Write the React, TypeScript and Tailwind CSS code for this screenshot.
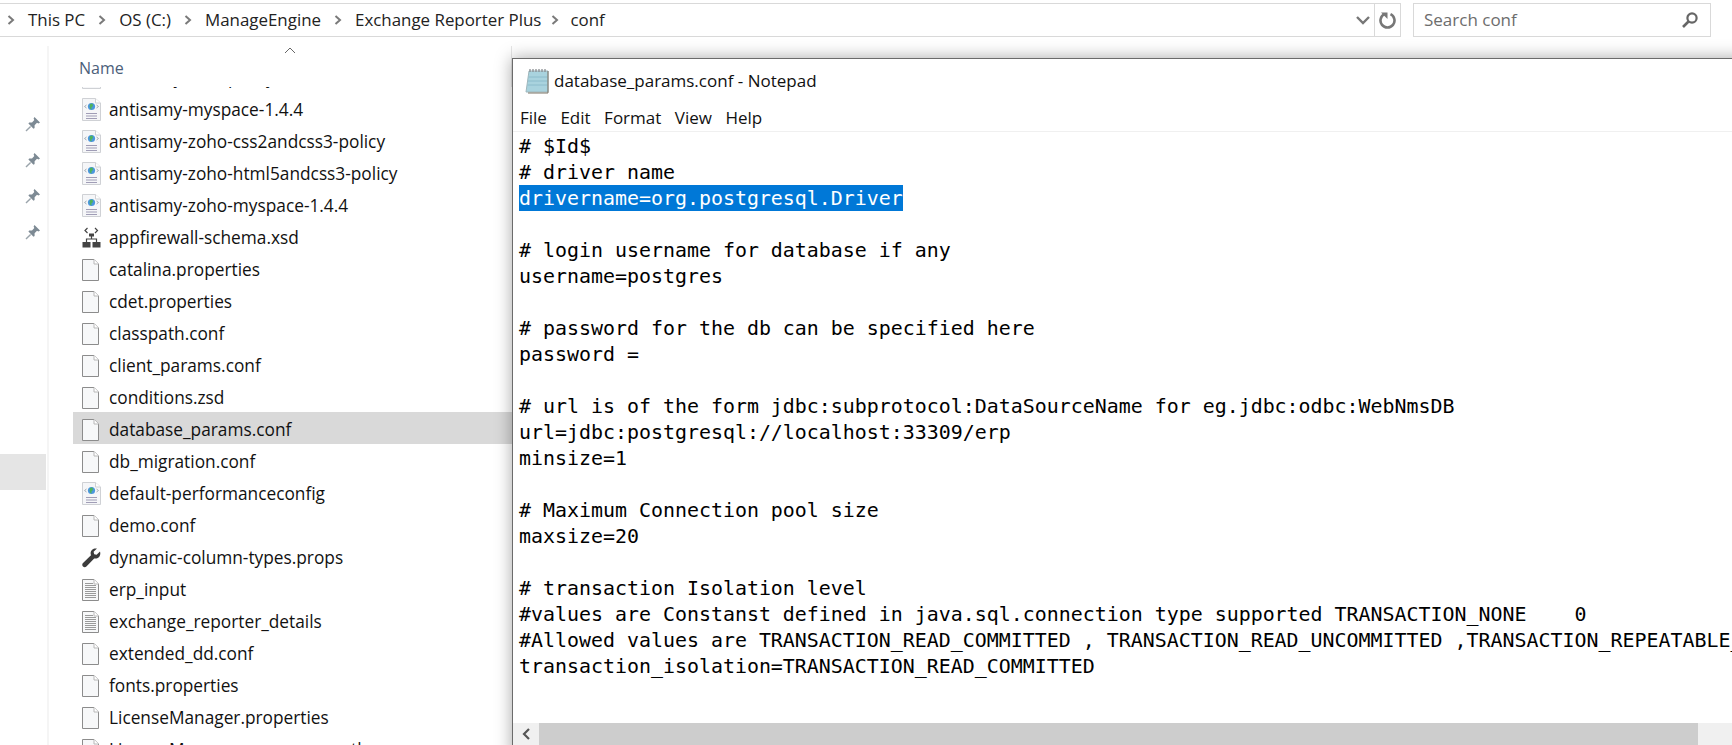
import React from 'react';

const uiFont = "[font-family:'Open_Sans',sans-serif]";

type Kind = 'blank' | 'web' | 'xsd' | 'wrench' | 'text';

const files: { name: string; kind: Kind; selected?: boolean }[] = [
  { name: 'antisamy-css3-policy', kind: 'web' },
  { name: 'antisamy-myspace-1.4.4', kind: 'web' },
  { name: 'antisamy-zoho-css2andcss3-policy', kind: 'web' },
  { name: 'antisamy-zoho-html5andcss3-policy', kind: 'web' },
  { name: 'antisamy-zoho-myspace-1.4.4', kind: 'web' },
  { name: 'appfirewall-schema.xsd', kind: 'xsd' },
  { name: 'catalina.properties', kind: 'blank' },
  { name: 'cdet.properties', kind: 'blank' },
  { name: 'classpath.conf', kind: 'blank' },
  { name: 'client_params.conf', kind: 'blank' },
  { name: 'conditions.zsd', kind: 'blank' },
  { name: 'database_params.conf', kind: 'blank', selected: true },
  { name: 'db_migration.conf', kind: 'blank' },
  { name: 'default-performanceconfig', kind: 'web' },
  { name: 'demo.conf', kind: 'blank' },
  { name: 'dynamic-column-types.props', kind: 'wrench' },
  { name: 'erp_input', kind: 'text' },
  { name: 'exchange_reporter_details', kind: 'text' },
  { name: 'extended_dd.conf', kind: 'blank' },
  { name: 'fonts.properties', kind: 'blank' },
  { name: 'LicenseManager.properties', kind: 'blank' },
  { name: 'LicenseManager-resources-auth', kind: 'blank' },
];

const crumbs = ['This PC', 'OS (C:)', 'ManageEngine', 'Exchange Reporter Plus', 'conf'];

const lines = [
  '# $Id$',
  '# driver name',
  'drivername=org.postgresql.Driver',
  '',
  '# login username for database if any',
  'username=postgres',
  '',
  '# password for the db can be specified here',
  'password =',
  '',
  '# url is of the form jdbc:subprotocol:DataSourceName for eg.jdbc:odbc:WebNmsDB',
  'url=jdbc:postgresql://localhost:33309/erp',
  'minsize=1',
  '',
  '# Maximum Connection pool size',
  'maxsize=20',
  '',
  '# transaction Isolation level',
  '#values are Constanst defined in java.sql.connection type supported TRANSACTION_NONE    0',
  '#Allowed values are TRANSACTION_READ_COMMITTED , TRANSACTION_READ_UNCOMMITTED ,TRANSACTION_REPEATABLE_READ ,TRANSACTION_SERIALIZABLE',
  'transaction_isolation=TRANSACTION_READ_COMMITTED',
];

function Chevron() {
  return (
    <svg width="8" height="10" viewBox="0 0 8 10" className="shrink-0">
      <path d="M1.5 1 L6 5 L1.5 9" fill="none" stroke="#7a7a7a" strokeWidth="2" />
    </svg>
  );
}

function Pin() {
  return (
    <svg width="16" height="16" viewBox="0 0 16 16">
      <path d="M9.5 1 L15 6.5 L13.5 7.5 L12 6.8 L9.6 9.3 L9.6 12 L8.5 12.8 L3.4 7.6 L4.2 6.5 L7 6.5 L9.3 4 L8.6 2.4 Z" fill="#7d8a94" />
      <path d="M5.6 10.4 L1 15" stroke="#9aa4ab" strokeWidth="1.4" />
    </svg>
  );
}

function PageShape({ children }: { children?: React.ReactNode }) {
  return (
    <svg width="18" height="22" viewBox="0 0 18 22" className="block">
      <path d="M0.5 0.5 H12 L16.5 5 V21.5 H0.5 Z" fill="#f7f8f9" stroke="#8c8c8c" />
      <path d="M12 0.5 V5 H16.5" fill="#ffffff" stroke="#b8b8b8" />
      {children}
    </svg>
  );
}

function FileIcon({ kind }: { kind: Kind }) {
  if (kind === 'blank') return <PageShape />;
  if (kind === 'text') {
    return (
      <PageShape>
        {[4, 6, 8, 10, 12, 14, 16, 18].map((y) => (
          <path key={y} d={`M3 ${y + 0.5} H${y < 6 ? 11 : 14}`} stroke="#9a9a9a" />
        ))}
      </PageShape>
    );
  }
  if (kind === 'web') {
    return (
      <svg width="20" height="23" viewBox="0 0 20 23" className="block">
        <path d="M0.5 0.5 H13.5 L18.5 5 V22.5 H0.5 Z" fill="#f5f6f8" stroke="#cfd1d5" />
        <path d="M13.5 0.5 V5 H18.5" fill="#ffffff" stroke="#cfd1d5" />
        <circle cx="9.5" cy="8.5" r="3.6" fill="#4a96de" />
        <path d="M8 6 L10.5 5.5 L11 8 L9.4 9.6 L9.6 11.6 L8.2 11 L7.6 8.4 Z" fill="#4fb35a" />
        <path d="M4.5 7 L2.5 8.5 L4.5 10 M14.5 7 L16.5 8.5 L14.5 10" fill="none" stroke="#a4adb6" />
        <path d="M4 15.5 H15 M4 18 H15 M4 20.5 H15" stroke="#a09db6" />
      </svg>
    );
  }
  if (kind === 'xsd') {
    return (
      <svg width="19" height="21" viewBox="0 0 19 21" className="block">
        <path d="M5.5 1 L3 3.5 L5.5 6 M13 1 L15.5 3.5 L13 6" fill="none" stroke="#444444" strokeWidth="1.2" />
        <path d="M9.5 8 V12 M4.5 15 V12 H14.5 V15" fill="none" stroke="#444444" strokeWidth="1.2" />
        <rect x="7" y="6.5" width="5" height="3" fill="#444444" />
        <rect x="0.5" y="15" width="8" height="5.5" fill="#444444" />
        <rect x="10.5" y="15" width="8" height="5.5" fill="#444444" />
      </svg>
    );
  }
  return (
    <svg width="19" height="20" viewBox="0 0 19 20" className="block">
      <path d="M18 3.5 L14.6 6.8 L12.2 6.2 L11.6 3.8 L15 0.6 C12 -0.2 8.6 1.8 8.6 5.2 C8.6 6 8.8 6.6 9 7.2 L1 15 C0 16 0 17.4 1 18.4 C2 19.4 3.4 19.4 4.4 18.4 L12.2 10.4 C15.8 11.4 19.4 7.8 18 3.5 Z" fill="#3c3c3c" />
    </svg>
  );
}

function NotepadIcon() {
  return (
    <svg width="24" height="26" viewBox="0 0 24 26">
      <path d="M4 3 H23 V24 H1 Z" fill="#a9d3de" stroke="#9fb7bd" />
      <path d="M3.5 9 H22.5 M3 13 H22.5 M2.5 17 H22.5" stroke="#8cbccb" />
      <path d="M23 3 V25 H3" fill="none" stroke="#7d7466" />
      <path d="M5 1 V4 M8 1 V4 M11 1 V4 M14 1 V4 M17 1 V4 M20 1 V4" stroke="#8a8f93" strokeWidth="1.3" />
    </svg>
  );
}

export default function App() {
  return (
    <div className={`w-[1732px] h-[745px] relative overflow-hidden bg-white text-[#111] flex flex-col ${uiFont}`}>
      {/* address bar + search */}
      <div className="h-[46px] shrink-0 pt-[3px] flex items-start">
        <div className="w-[1401px] h-[34px] border border-l-0 border-[#d9d9d9] flex items-center pl-[7px]">
          <div className="flex-1 flex items-center text-[16.9px] text-[#222]">
            {crumbs.map((c, i) => (
              <React.Fragment key={c}>
                <Chevron />
                <span className={i === 3 ? 'ml-[13px] mr-[10px]' : i === 4 ? 'ml-[11px]' : 'mx-[13px]'}>{c}</span>
              </React.Fragment>
            ))}
          </div>
          <svg width="14" height="10" viewBox="0 0 14 10" className="mr-[4px]">
            <path d="M1 2 L7 8 L13 2" fill="none" stroke="#777" strokeWidth="2.4" />
          </svg>
          <div className="w-[26px] h-full border-l border-[#d9d9d9] flex items-center justify-center">
            <svg width="18" height="20" viewBox="0 0 18 20">
              <path d="M11.5 4.2 A7 7 0 1 1 5.5 4.2" fill="none" stroke="#777" strokeWidth="2.6" />
              <path d="M2 2.5 H8.5 V9 Z" fill="#777" />
            </svg>
          </div>
        </div>
        <div className="ml-[12px] w-[298px] h-[34px] border border-[#d9d9d9] flex items-center justify-between pl-[10px] pr-[11px]">
          <span className="text-[17px] text-[#6d6d6d]">Search conf</span>
          <svg width="18" height="18" viewBox="0 0 18 18">
            <circle cx="11" cy="7" r="4.6" fill="none" stroke="#666" strokeWidth="2.2" />
            <path d="M7.5 10.5 L2 16" stroke="#666" strokeWidth="2.6" />
          </svg>
        </div>
      </div>

      {/* explorer body */}
      <div className="flex-1 flex min-h-0">
        <div className="w-[49px] shrink-0 border-r-2 border-[#f5f5f5] flex flex-col">
          <div className="pt-[70px] pl-[25px] flex flex-col gap-[20px]">
            <Pin />
            <Pin />
            <Pin />
            <Pin />
          </div>
          <div className="mt-[214px] w-[46px] h-[36px] bg-[#e5e5e5]" />
        </div>
        <div className="w-[463px] shrink-0 flex flex-col pl-[24px]">
          <div className="h-[41px] shrink-0 relative border-r border-[#e5e5e5] pl-[6px] pt-[10px] text-[16px] text-[#4c607a]">
            Name
            <svg width="12" height="7" viewBox="0 0 12 7" className="absolute left-[211px] top-[1px]">
              <path d="M1 6 L6 1 L11 6" fill="none" stroke="#666" />
            </svg>
          </div>
          <div className="flex-1 min-h-0 overflow-hidden">
            <div className="-mt-[27px]">
              {files.map((f) => (
                <div key={f.name} className={`h-[32px] flex items-center pl-[9px] pt-[3px] text-[17.3px] ${f.selected ? 'bg-[#d9d9d9]' : ''}`}>
                  <div className="w-[27px] shrink-0">
                    <FileIcon kind={f.kind} />
                  </div>
                  <span className="whitespace-nowrap">{f.name}</span>
                </div>
              ))}
            </div>
          </div>
        </div>
        <div className="flex-1" />
      </div>

      {/* notepad window, sits over the explorer and runs off the page */}
      <div className="absolute left-[512px] top-[58px] w-[1240px] h-[700px] bg-white border border-[#6b6b6b] shadow-[0_0_16px_rgba(0,0,0,0.35)] flex flex-col">
        <div className="h-[44px] shrink-0 flex items-center pl-[12px] gap-[5px] text-[17px] text-[#111]">
          <NotepadIcon />
          <span>database_params.conf - Notepad</span>
        </div>
        <div className="h-[29px] shrink-0 flex items-center pl-[7px] pt-[2px] gap-[13.5px] text-[17px] border-b border-[#f0f0f0]">
          <span>File</span>
          <span>Edit</span>
          <span>Format</span>
          <span>View</span>
          <span>Help</span>
        </div>
        <div className="flex-1 min-h-0 overflow-hidden pl-[6px] pt-[1px] font-['DejaVu_Sans_Mono',monospace] text-[19.93px] leading-[28px] text-black">
          {lines.map((l, i) => (
            <div key={i} className="h-[26px] whitespace-pre">
              {i === 2 ? <span className="bg-[#0078d7] text-white inline-block h-[26px] align-top">{l}</span> : l}
            </div>
          ))}
        </div>
        <div className="h-[34px] shrink-0 flex items-start bg-[#f0f0f0]">
          <div className="w-[26px] h-[22px] flex items-center justify-center">
            <svg width="10" height="12" viewBox="0 0 10 12">
              <path d="M8 1 L3 6 L8 11" fill="none" stroke="#555" strokeWidth="2.2" />
            </svg>
          </div>
          <div className="w-[1159px] h-[22px] bg-[#cdcdcd]" />
        </div>
      </div>
    </div>
  );
}
